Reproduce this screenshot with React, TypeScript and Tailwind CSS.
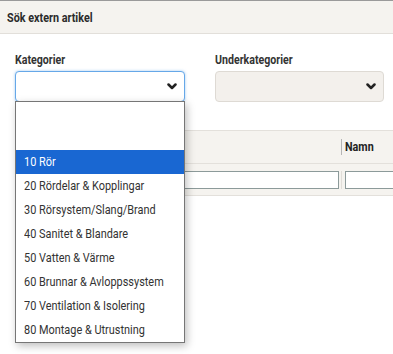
import React from "react";

const Chevron = () => (
  <svg width="10" height="7" viewBox="0 0 10 7" className="block">
    <polyline points="1.5,1.5 5,5 8.5,1.5" fill="none" stroke="#222" strokeWidth="2.5" strokeLinecap="round" strokeLinejoin="round" />
  </svg>
);

const items = [
  "10 Rör",
  "20 Rördelar & Kopplingar",
  "30 Rörsystem/Slang/Brand",
  "40 Sanitet & Blandare",
  "50 Vatten & Värme",
  "60 Brunnar & Avloppssystem",
  "70 Ventilation & Isolering",
  "80 Montage & Utrustning",
];

export default function App() {
  return (
    <div
      className="relative w-[393px] h-[354px] overflow-hidden bg-white text-[#333]"
      style={{ fontFamily: "Roboto, 'Liberation Sans', sans-serif" }}
    >
      <div className="h-[34px] border-t border-t-[#9a9a9a] border-b border-b-[#e2dfda] bg-[#f5f3ef] px-[7px] flex items-center">
        <span className="inline-block origin-left scale-x-[0.8] whitespace-nowrap text-[13.5px] font-bold text-[#2b2b2b]">Sök extern artikel</span>
      </div>

      <div className="px-[15px] pt-[19px]">
        <div className="grid grid-cols-[170px_169px] gap-x-[30px]">
          <div className="flex flex-col">
            <label className="inline-block origin-left scale-x-[0.85] whitespace-nowrap text-[12.5px] font-bold leading-[14px] mb-[4px] text-[#333]">Kategorier</label>
            <div className="h-[31px] rounded-[4px] border border-[#66a8e8] bg-white shadow-[0_0_3px_rgba(102,168,232,0.6)] flex items-center justify-end pr-[7px]">
              <Chevron />
            </div>
          </div>
          <div className="flex flex-col">
            <label className="inline-block origin-left scale-x-[0.85] whitespace-nowrap text-[12.5px] font-bold leading-[14px] mb-[4px] text-[#333]">Underkategorier</label>
            <div className="h-[31px] rounded-[4px] border border-[#dedad4] bg-[#f3f0ec] flex items-center justify-end pr-[7px]">
              <Chevron />
            </div>
          </div>
        </div>

        <div className="mt-[28px] w-[400px]">
          <div className="h-[34px] border-t border-b border-[#e3e0db] bg-[#f5f3ef] flex items-center">
            <div className="w-[326px]" />
            <div className="h-[16px] w-px bg-[#b5b5b5]" />
            <span className="ml-[3px] inline-block origin-left scale-x-[0.86] text-[12.5px] font-bold text-[#222]">Namn</span>
          </div>
          <div className="h-[32px] border-b border-[#e3e0db] bg-[#f5f3ef] flex items-center">
            <div className="w-[324px] h-[18px] border border-[#8c9a9a] bg-white" />
            <div className="mx-[2px] h-[18px] w-px bg-[#e0ddd8]" />
            <div className="ml-[1px] w-[60px] h-[18px] border border-[#8c9a9a] bg-white" />
          </div>
        </div>
      </div>

      <div className="absolute left-[15px] top-[101px] w-[170px] h-[242px] border border-[#767676] bg-white shadow-[2px_3px_8px_rgba(0,0,0,0.25)]">
        <div className="h-[24px]" />
        <div className="h-[24px]" />
        {items.map((t, i) => (
          <div
            key={t}
            className={
              "h-[24px] flex items-center pl-[8px] " +
              (i === 0 ? "bg-[#1967d2] text-white" : "text-[#333]")
            }
          >
            <span className="inline-block origin-left scale-x-[0.84] whitespace-nowrap text-[13px]">{t}</span>
          </div>
        ))}
      </div>
    </div>
  );
}
